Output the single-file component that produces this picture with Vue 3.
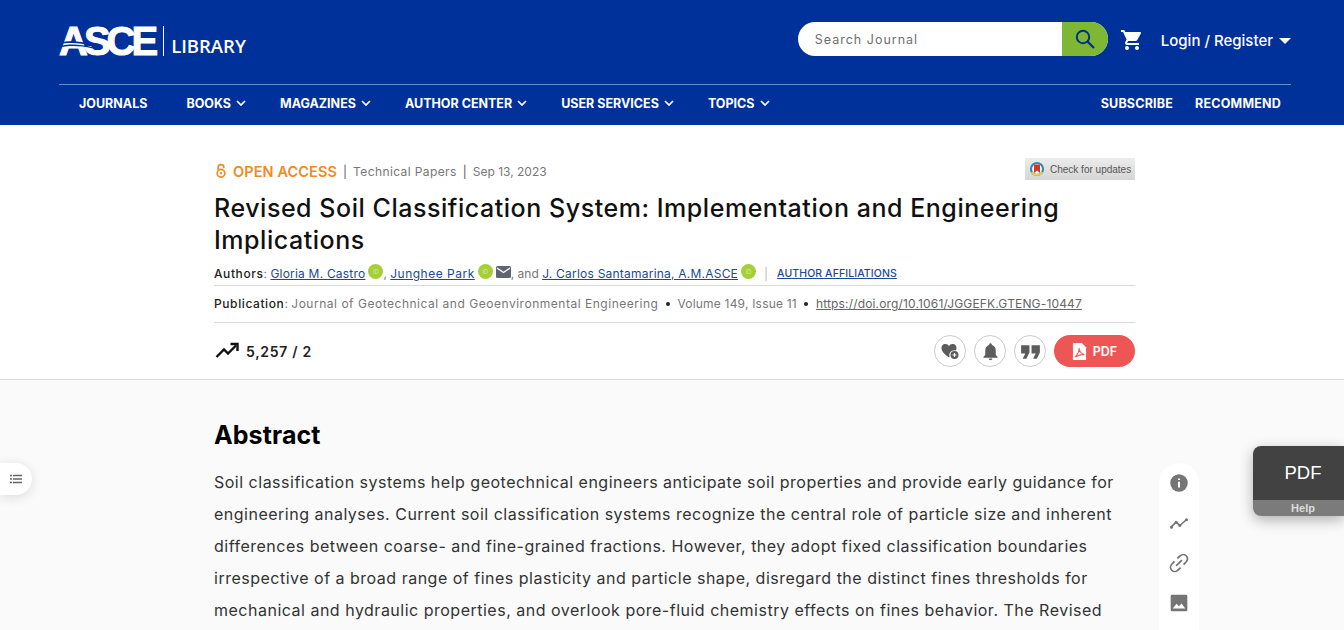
<template>
  <div class="page">
    <header class="site-header">
      <div class="top-row">
        <a class="logo">
          <span class="logo-mark">ASCE
            <svg class="logo-stripes" viewBox="0 0 34 12" width="34" height="12">
              <path d="M0 3 C10 0 22 1 34 4 L34 5.400 C22 2.600 10 2 0 4.400Z M0 6.400 C10 3.600 22 4 34 7 L34 8.200 C22 5.600 10 5.400 0 7.800Z" fill="#00309a" />
            </svg>
          </span>
          <span class="logo-bar"></span>
          <span class="logo-lib">LIBRARY</span>
        </a>
        <div class="top-tools">
          <div class="search">
            <span class="search-text">Search Journal</span>
            <span class="search-btn">
              <svg viewBox="0 0 24 24" width="24" height="24"><circle cx="10" cy="10" r="6.200" fill="none" stroke="#00337f" stroke-width="2" /><path d="M14.600 14.600 L21 21" stroke="#00337f" stroke-width="2.200" /></svg>
            </span>
          </div>
          <svg class="cart" viewBox="0 0 24 24" width="24" height="24"><path fill="#fff" d="M7 18c-1.100 0-1.990.9-1.990 2S5.900 22 7 22s2-.9 2-2-.9-2-2-2zM1 2v2h2l3.600 7.590-1.350 2.450c-.16.28-.25.61-.25.96 0 1.100.9 2 2 2h12v-2H7.420c-.14 0-.25-.11-.25-.25l.03-.12.9-1.630h7.450c.75 0 1.410-.41 1.750-1.030l3.580-6.490c.08-.14.12-.31.12-.48 0-.55-.45-1-1-1H5.210l-.94-2H1zm16 16c-1.100 0-1.990.9-1.990 2s.89 2 1.990 2 2-.9 2-2-.9-2-2-2z" /></svg>
          <span class="login">Login / Register</span>
          <span class="caret"></span>
        </div>
      </div>
      <nav class="nav-row">
        <div class="nav-left">
          <a v-for="item in navItems" :key="item.label" class="nav-link">
            {{ item.label }}
            <svg v-if="item.drop" viewBox="0 0 10 6" width="10" height="6"><path d="M1 1 L5 5 L9 1" fill="none" stroke="#fff" stroke-width="1.700" /></svg>
          </a>
        </div>
        <div class="nav-right">
          <a class="nav-link">SUBSCRIBE</a>
          <a class="nav-link">RECOMMEND</a>
        </div>
      </nav>
    </header>

    <section class="article-head">
      <div class="column">
        <div class="meta-row">
          <svg viewBox="0 0 12 18" width="12" height="16"><g fill="none" stroke="#f08a24" stroke-width="1.900"><circle cx="6" cy="11.500" r="4.300" /><path d="M2.800 8 V5 A3.200 3.200 0 0 1 9.200 5 V6" /></g><circle cx="6" cy="11.500" r="1.300" fill="#f08a24" /></svg>
          <span class="open-access">OPEN ACCESS</span>
          <span class="sep">|</span>
          <span class="paper-type">Technical Papers</span>
          <span class="sep">|</span>
          <span>Sep 13, 2023</span>
          <span class="updates">
            <svg viewBox="0 0 16 16" width="16" height="16"><circle cx="8" cy="8" r="6" fill="#fff" stroke="#2a8fa8" stroke-width="2.200" /><path d="M2.800 11 A6 6 0 0 0 13.200 11" fill="none" stroke="#e8c65a" stroke-width="2.200" /><path d="M5 3.500 H11 V12 L8 9.500 L5 12Z" fill="#d8322f" /></svg>
            Check for updates
          </span>
        </div>
        <h1 class="title">Revised Soil Classification System: Implementation and Engineering Implications</h1>
        <div class="info-row authors">
          <b>Authors</b>:&nbsp;<a class="au-castro">Gloria M. Castro</a><span class="orcid">iD</span>,&nbsp;<a class="au-park">Junghee Park</a><span class="orcid">iD</span>
          <svg class="mail" viewBox="0 0 15 12" width="15" height="12"><rect width="15" height="12" rx="1.500" fill="#5f6670" /><path d="M1 2 L7.500 6.500 L14 2" fill="none" stroke="#fff" stroke-width="1.400" /></svg>, and&nbsp;<a class="au-santamarina">J. Carlos Santamarina, A.M.ASCE</a><span class="orcid">iD</span>
          <span class="sep thin">|</span>
          <a class="affil">AUTHOR AFFILIATIONS</a>
        </div>
        <div class="info-row publication">
          <b>Publication</b>:&nbsp;<span class="journal">Journal of Geotechnical and Geoenvironmental Engineering</span>
          <span class="dot"></span><span class="volume">Volume 149, Issue 11</span><span class="dot"></span>
          <a class="doi">https://doi.org/10.1061/JGGEFK.GTENG-10447</a>
        </div>
        <div class="stats-row">
          <svg viewBox="0 0 24 24" width="24" height="24"><path d="M1.500 18 L9 10.500 L13 14.500 L21 6.500" fill="none" stroke="#111" stroke-width="2.400" /><path d="M15.500 5 H22.500 V12" fill="none" stroke="#111" stroke-width="2.400" /></svg>
          <span class="stats">5,257 / 2</span>
          <div class="actions">
            <span class="round-btn">
              <svg viewBox="0 0 20 20" width="20" height="20"><path fill="#5c5c5c" d="M9 16.500 C3 12 1.500 9.500 1.500 7 A4 4 0 0 1 9 5 A4 4 0 0 1 16.500 7 C16.500 8 16.200 8.800 15.800 9.500 A5 5 0 0 0 9.500 16Z" /><circle cx="14.500" cy="14" r="4" fill="#5c5c5c" /><path d="M12.500 14 H16.500 M14.500 12 V16" stroke="#fff" stroke-width="1.200" /></svg>
            </span>
            <span class="round-btn">
              <svg viewBox="0 0 24 24" width="21" height="21"><path fill="#5c5c5c" d="M12 22c1.100 0 2-.9 2-2h-4c0 1.100.89 2 2 2zm6-6v-5c0-3.070-1.640-5.640-4.500-6.320V4c0-.83-.67-1.500-1.500-1.500s-1.500.67-1.500 1.500v.68C7.630 5.360 6 7.920 6 11v5l-2 2v1h16v-1l-2-2z" /></svg>
            </span>
            <span class="round-btn">
              <svg viewBox="0 0 24 24" width="25" height="25"><path fill="#5c5c5c" d="M3 6h8v7l-3 6H4.500l2.500-5H3zM13 6h8v7l-3 6h-3.500l2.500-5h-4z" /></svg>
            </span>
            <span class="pdf-btn">
              <svg viewBox="0 0 16 18" width="15" height="17"><path fill="#fff" d="M1 0 H10.500 L15 4.500 V18 H1Z" /><path d="M3.500 15 C6 12 8 8 7.500 5.500 C8 9 10 11.500 13 12 C9.500 12 6.500 13 3.500 15Z" fill="none" stroke="#ee5656" stroke-width="1.200" /></svg>
              PDF
            </span>
          </div>
        </div>
      </div>
    </section>

    <main class="article-body">
      <div class="column">
        <h2 class="abstract-title">Abstract</h2>
        <p class="abstract">
          <span v-for="line in abstractLines" :key="line" class="abstract-line">{{ line }}</span>
        </p>
      </div>
    </main>

    <button class="toc-tab">
      <svg viewBox="0 0 12 10" width="12" height="10"><path d="M0 1.500H2M3 1.500H12M0 5H2M3 5H12M0 8.500H2M3 8.500H12" stroke="#666" stroke-width="1.400" /></svg>
    </button>

    <aside class="side-rail">
      <svg viewBox="0 0 24 24" width="20" height="20"><circle cx="12" cy="12" r="10.500" fill="#757575" /><path d="M12 10.500V17.500M12 6.500V8.500" stroke="#fff" stroke-width="2.400" /></svg>
      <svg viewBox="0 0 24 24" width="20" height="20"><path d="M2.500 17 L8.500 11 L13 15 L21.500 7.500" fill="none" stroke="#757575" stroke-width="2" /><g fill="#757575"><circle cx="3" cy="17" r="1.800" /><circle cx="8.500" cy="11" r="1.800" /><circle cx="13" cy="15" r="1.800" /><circle cx="21" cy="8" r="1.800" /></g></svg>
      <svg viewBox="0 0 24 24" width="20" height="20"><g fill="none" stroke="#757575" stroke-width="2.100"><path d="M10 6.500 L13.500 3.300 A4.600 4.600 0 0 1 20.700 10.500 L17.500 14" /><path d="M14 17.500 L10.500 20.700 A4.600 4.600 0 0 1 3.300 13.500 L6.500 10" /><path d="M8.500 15.500 L15.500 8.500" /></g></svg>
      <svg viewBox="0 0 24 24" width="20" height="20"><rect x="2" y="2" width="20" height="20" rx="1.500" fill="#757575" /><path d="M4.500 18.500 L9 13 L12 16 L15 12.500 L19.500 18.500Z" fill="#fff" /></svg>
    </aside>

    <div class="pdf-help">
      <div class="pdf-help-top">PDF</div>
      <div class="pdf-help-bottom">Help</div>
    </div>
  </div>
</template>

<script setup>
const navItems = [
  { label: 'JOURNALS', drop: false },
  { label: 'BOOKS', drop: true },
  { label: 'MAGAZINES', drop: true },
  { label: 'AUTHOR CENTER', drop: true },
  { label: 'USER SERVICES', drop: true },
  { label: 'TOPICS', drop: true },
]

const abstractLines = [
  'Soil classification systems help geotechnical engineers anticipate soil properties and provide early guidance for',
  'engineering analyses. Current soil classification systems recognize the central role of particle size and inherent',
  'differences between coarse- and fine-grained fractions. However, they adopt fixed classification boundaries',
  'irrespective of a broad range of fines plasticity and particle shape, disregard the distinct fines thresholds for',
  'mechanical and hydraulic properties, and overlook pore-fluid chemistry effects on fines behavior. The Revised',
]
</script>

<style>
html, body {
  margin: 0;
  overflow: hidden;
}
</style>

<style scoped>
.page {
  position: relative;
  height: 630px;
  overflow: hidden;
  background: #fafafa;
  font-family: Inter, "Open Sans", sans-serif;
  color: #222;
}

.site-header {
  background: #00309a;
  height: 125px;
  padding: 0 53px 0 59px;
  color: #fff;
}

.top-row {
  height: 84px;
  border-bottom: 1px solid #6a8ad6;
  display: flex;
  align-items: center;
  justify-content: space-between;
}

.logo {
  display: flex;
  align-items: center;
  margin-top: -3px;
}

.logo-mark {
  position: relative;
  font-family: "Liberation Sans", sans-serif;
  font-weight: 700;
  font-size: 40px;
  letter-spacing: -4px;
  line-height: 32px;
  -webkit-text-stroke: 1px #fff;
}

.logo-stripes {
  position: absolute;
  left: -1px;
  top: 15px;
}

.logo-bar {
  width: 1px;
  height: 30px;
  background: #fff;
  margin: 0 7px 0 9px;
}

.logo-lib {
  font-family: "Open Sans", sans-serif;
  font-size: 18.500px;
  font-weight: 600;
  margin-top: 9px;
}

.top-tools {
  display: flex;
  align-items: center;
  margin-top: -6px;
}

.search {
  width: 310px;
  height: 34px;
  background: #fff;
  border-radius: 17px;
  display: flex;
  justify-content: space-between;
  overflow: hidden;
}

.search-text {
  font-size: 12.500px;
  letter-spacing: 1px;
  color: #6f6f6f;
  line-height: 35px;
  padding-left: 17px;
}

.search-btn {
  width: 46px;
  background: #7db733;
  display: flex;
  align-items: center;
  justify-content: center;
}

.cart {
  margin: 2px 0 0 12px;
}

.login {
  margin: 3px 0 0 17px;
  font-size: 15px;
  font-weight: 500;
}

.caret {
  margin: 3px 0 0 6px;
  border: 6px solid transparent;
  border-top: 6px solid #fff;
  border-bottom: 0;
}

.nav-row {
  height: 40px;
  box-sizing: border-box;
  display: flex;
  align-items: center;
  justify-content: space-between;
  padding: 0 10px 4px 20px;
}

.nav-left {
  display: flex;
  gap: 34px;
}

.nav-left .nav-link:first-child {
  margin-right: 5px;
}

.nav-right {
  display: flex;
  gap: 22px;
  letter-spacing: 0.2px;
}

.nav-link {
  display: flex;
  align-items: center;
  gap: 5px;
  font-size: 12.500px;
  font-weight: 700;
  color: #fff;
}

.article-head {
  background: #fff;
  height: 223px;
  padding-top: 31px;
  border-bottom: 1px solid #d9d9d9;
}

.column {
  width: 921px;
  margin-left: 214px;
}

.meta-row {
  display: flex;
  align-items: center;
  height: 30px;
  font-size: 12px;
  color: #777;
}

.meta-row > svg {
  margin: 0 6px 0 1px;
}

.open-access {
  font-size: 14.500px;
  font-weight: 600;
  letter-spacing: 0.1px;
  color: #f08a24;
}

.paper-type {
  letter-spacing: 0.4px;
}

.sep {
  margin: 0 6px;
  color: #555;
}

.updates {
  margin: -4px 0 0 auto;
  width: 110px;
  height: 22px;
  box-sizing: border-box;
  padding-left: 4px;
  background: linear-gradient(#ececec, #d6d6d6);
  display: flex;
  align-items: center;
  gap: 5px;
  font-family: "Liberation Sans", sans-serif;
  font-size: 10px;
  color: #555;
  white-space: nowrap;
}

.title {
  margin: 0;
  font-size: 25px;
  font-weight: 500;
  line-height: 32px;
  color: #111;
  letter-spacing: 0.54px;
  padding-top: 6px;
}

.info-row {
  display: flex;
  align-items: center;
  font-size: 12px;
  color: #777;
  white-space: nowrap;
}

.info-row b {
  font-weight: 500;
  color: #222;
  letter-spacing: 0.6px;
}

.authors {
  height: 30px;
  border-bottom: 1px solid #d9d9d9;
  padding-top: 5px;
  box-sizing: border-box;
}

.authors a {
  color: #1e4796;
  text-decoration: underline;
}

.au-castro {
  letter-spacing: 0.2px;
}

.au-park {
  letter-spacing: 0.5px;
}

.au-santamarina {
  letter-spacing: 0.22px;
}

.orcid {
  width: 15px;
  height: 15px;
  border-radius: 50%;
  background: #a6ce39;
  color: #d7e9a0;
  font-size: 6px;
  line-height: 15px;
  text-align: center;
  margin: -3px 0 0 3px;
}

.mail {
  margin: -2px 0 0 3px;
}

.sep.thin {
  color: #bbb;
  margin: 0 9px 0 8px;
}

.authors .affil {
  font-size: 10.500px;
  font-weight: 500;
  letter-spacing: 0.1px;
}

.publication {
  height: 37px;
  border-bottom: 1px solid #d9d9d9;
  box-sizing: border-box;
  padding-bottom: 1px;
}

.journal {
  letter-spacing: 0.52px;
}

.volume {
  letter-spacing: 0.2px;
}

.dot {
  width: 4px;
  height: 4px;
  border-radius: 50%;
  background: #222;
  margin: 0 7.500px;
}

.doi {
  text-decoration: underline;
  color: #666;
  letter-spacing: 0.16px;
}

.stats-row {
  display: flex;
  align-items: center;
  height: 56px;
  padding-left: 1px;
}

.stats {
  margin-left: 7px;
  font-size: 14px;
  font-weight: 600;
  letter-spacing: 0.7px;
}

.actions {
  margin-left: auto;
  display: flex;
  align-items: center;
  gap: 8px;
}

.round-btn {
  width: 30px;
  height: 30px;
  border: 1px solid #ccc;
  border-radius: 50%;
  background: #fff;
  display: flex;
  align-items: center;
  justify-content: center;
}

.pdf-btn {
  width: 81px;
  height: 32px;
  border-radius: 16px;
  background: #ee5656;
  color: #fff;
  display: flex;
  align-items: center;
  justify-content: center;
  gap: 6px;
  font-size: 12.500px;
  font-weight: 600;
}

.article-body {
  padding-top: 40px;
}

.abstract-title {
  margin: 0;
  font-size: 25px;
  line-height: 30px;
  font-weight: 700;
  letter-spacing: 0.1px;
  color: #000;
}

.abstract {
  margin: 16px 0 0;
  font-size: 16px;
  line-height: 32px;
  color: #333;
  letter-spacing: 0.5px;
}

.abstract-line {
  display: block;
  white-space: nowrap;
}

.toc-tab {
  position: absolute;
  left: 0;
  top: 463px;
  width: 32px;
  height: 32px;
  padding: 0;
  border: 0;
  border-radius: 0 16px 16px 0;
  background: #fff;
  box-shadow: 0 2px 12px rgba(0, 0, 0, 0.12);
  display: flex;
  align-items: center;
  justify-content: center;
}

.side-rail {
  position: absolute;
  left: 1159px;
  top: 463px;
  width: 40px;
  height: 200px;
  border-radius: 20px;
  background: #fff;
  display: flex;
  flex-direction: column;
  align-items: center;
  padding-top: 10px;
  gap: 20px;
  box-sizing: border-box;
}

.pdf-help {
  position: absolute;
  right: 0;
  top: 446px;
  width: 91px;
  height: 70px;
  border-radius: 8px 0 0 8px;
  overflow: hidden;
  box-shadow: 0 4px 14px rgba(0, 0, 0, 0.3);
  font-family: "Liberation Sans", sans-serif;
  text-align: center;
  color: #fff;
}

.pdf-help-top {
  height: 54px;
  background: #424242;
  font-size: 18.500px;
  line-height: 54px;
  padding-left: 9px;
}

.pdf-help-bottom {
  height: 16px;
  background: #7b7b7b;
  font-size: 11px;
  font-weight: 700;
  line-height: 16px;
  color: #ddd;
  padding-left: 9px;
}
</style>
